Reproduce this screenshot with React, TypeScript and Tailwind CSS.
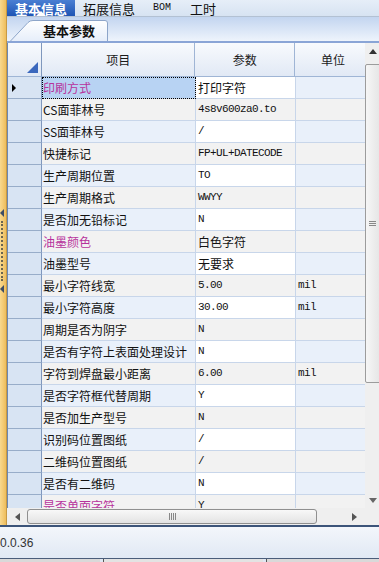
import clsx from 'clsx';

interface ParamRow {
  item: string;
  value: string;
  unit?: string;
  mark?: boolean;
}

const ROWS: ParamRow[] = [
  { item: '印刷方式', value: '打印字符', mark: true },
  { item: 'CS面菲林号', value: '4s8v600za0.to' },
  { item: 'SS面菲林号', value: '/' },
  { item: '快捷标记', value: 'FP+UL+DATECODE' },
  { item: '生产周期位置', value: 'TO' },
  { item: '生产周期格式', value: 'WWYY' },
  { item: '是否加无铅标记', value: 'N' },
  { item: '油墨颜色', value: '白色字符', mark: true },
  { item: '油墨型号', value: '无要求' },
  { item: '最小字符线宽', value: '5.00', unit: 'mil' },
  { item: '最小字符高度', value: '30.00', unit: 'mil' },
  { item: '周期是否为阴字', value: 'N' },
  { item: '是否有字符上表面处理设计', value: 'N' },
  { item: '字符到焊盘最小距离', value: '6.00', unit: 'mil' },
  { item: '是否字符框代替周期', value: 'Y' },
  { item: '是否加生产型号', value: 'N' },
  { item: '识别码位置图纸', value: '/' },
  { item: '二维码位置图纸', value: '/' },
  { item: '是否有二维码', value: 'N' },
  { item: '是否单面字符', value: 'Y', mark: true },
];

const CJK = "font-['Noto_Sans_CJK_SC',sans-serif]";
const MONO = "font-['Liberation_Mono','Noto_Sans_CJK_SC',monospace]";

function hasCjk(s: string) {
  return /[\u4e00-\u9fff]/.test(s);
}

function Splitter() {
  return (
    <div className="relative w-[7px] shrink-0 bg-gradient-to-r from-[#f9d98e] to-[#eebd5c] border-r border-[#c79a45]">
      <div className="absolute left-0 top-[209px] w-0 h-0 border-y-[4px] border-y-transparent border-r-[4px] border-r-[#3d4d66]" />
      <div className="absolute left-[1px] top-[221px] h-[60px] border-l-2 border-dotted border-[#6b6450]" />
      <div className="absolute left-0 top-[285px] w-0 h-0 border-y-[4px] border-y-transparent border-r-[4px] border-r-[#3d4d66]" />
    </div>
  );
}

function TopTabs() {
  return (
    <div className="flex h-[17px] items-stretch bg-gradient-to-b from-[#e6eef8] to-[#d7e3f2] border-b border-[#b3c1d3] text-[13px] leading-none">
      <div className={clsx('relative w-[68px] flex items-center justify-center bg-gradient-to-b from-[#4a7fd3] to-[#1e54b4] text-white font-bold', CJK)}>
        基本信息
        <div className="absolute left-[29px] bottom-0 w-0 h-0 border-x-[5px] border-x-transparent border-b-[5px] border-b-white" />
      </div>
      <div className={clsx('ml-[8px] flex items-center text-[#111]', CJK)}>拓展信息</div>
      <div className="ml-[18px] flex items-center text-[10px] text-[#111] font-['Liberation_Mono',monospace]">BOM</div>
      <div className={clsx('ml-[19px] flex items-center text-[#111]', CJK)}>工时</div>
    </div>
  );
}

function SubTabs() {
  return (
    <div className="h-[24px] flex items-end pl-[3px] bg-gradient-to-b from-[#c3d5f0] to-[#eef4fc]">
      <div className="relative w-[98px] h-[21px] flex items-center">
        <svg className="absolute inset-0" width="98" height="21" viewBox="0 0 98 21">
          <defs>
            <linearGradient id="subtab" x1="0" y1="0" x2="0" y2="1">
              <stop offset="0" stopColor="#ffffff" />
              <stop offset="1" stopColor="#e6eefa" />
            </linearGradient>
          </defs>
          <path d="M0.5,21 L18,2.5 Q20,0.5 23,0.5 L95,0.5 Q97.5,0.5 97.5,3 L97.5,21" fill="url(#subtab)" stroke="#8da5c9" />
        </svg>
        <span className={clsx('relative pl-[33px] text-[13px] font-bold text-[#111] leading-none', CJK)}>基本参数</span>
      </div>
    </div>
  );
}

function HeaderRow() {
  const cell = 'h-[34px] flex items-center border-r border-b border-[#9fb5d5] bg-gradient-to-b from-[#f8fafd] to-[#e1e9f5] text-[12px] text-[#1a1a1a] leading-none';
  return (
    <div className="flex">
      <div className={clsx(cell, 'relative w-[34px] border-r-[#7f97bd]')}>
        <div className="absolute right-[3px] bottom-[3px] w-0 h-0 border-l-[11px] border-l-transparent border-b-[11px] border-b-[#3b68bd]" />
      </div>
      <div className={clsx(cell, 'w-[154px] justify-center', CJK)}>项目</div>
      <div className={clsx(cell, 'w-[100px] justify-center', CJK)}>参数</div>
      <div className={clsx(cell, 'w-[70px] justify-end pr-[20px] border-r-0', CJK)}>单位</div>
    </div>
  );
}

function DataRow({ row, index }: { row: ParamRow; index: number }) {
  const odd = index % 2 === 1;
  const selected = index === 0;
  const line = 'border-b border-[#c8d6ea]';
  return (
    <div className="flex h-[22px] shrink-0">
      <div className="w-[34px] shrink-0 flex items-center pl-[4px] bg-[#d8e4f3] border-b border-r border-[#98adc9] border-r-[#7f97bd]">
        {selected && <div className="w-0 h-0 border-y-[4px] border-y-transparent border-l-[4px] border-l-black" />}
      </div>
      <div
        className={clsx(
          'w-[154px] shrink-0 flex items-center pl-[1px] text-[12px] leading-none whitespace-nowrap overflow-hidden border-r border-[#b3c6e1]',
          line,
          CJK,
          selected ? 'bg-[#b8d3f3] outline outline-1 outline-dotted outline-offset-[-1px] outline-black' : odd ? 'bg-[#f2f2f2]' : 'bg-[#e9f0fa]',
          row.mark ? 'text-[#b7329c]' : 'text-[#111]'
        )}
      >
        {row.item}
      </div>
      <div
        className={clsx(
          'w-[100px] shrink-0 flex items-center pl-[2px] leading-none whitespace-nowrap overflow-hidden border-r border-[#c2d2e8] text-[#111]',
          line,
          odd ? 'bg-[#f2f2f2]' : 'bg-white',
          hasCjk(row.value) ? clsx(CJK, 'text-[12px]') : clsx(MONO, 'text-[11px] tracking-[-0.6px]')
        )}
      >
        {row.value}
      </div>
      <div
        className={clsx(
          'w-[70px] shrink-0 flex items-center pl-[2px] text-[11px] tracking-[-0.6px] leading-none text-[#111]',
          line,
          MONO,
          odd ? 'bg-[#f2f2f2]' : 'bg-[#e9f0fa]'
        )}
      >
        {row.unit}
      </div>
    </div>
  );
}

function VScroll() {
  return (
    <div className="relative w-[14px] shrink-0 bg-[#efefef]">
      <div className="absolute left-[4px] top-[6px] w-0 h-0 border-x-[4px] border-x-transparent border-b-[5px] border-b-[#333]" />
      <div className="absolute left-0 top-[21px] w-[17px] h-[319px] rounded-[2px] border border-[#9c9c9c] bg-gradient-to-r from-[#f6f6f6] to-[#e4e4e4] flex flex-col items-center justify-center gap-[1px] pr-[3px]">
        <div className="w-[7px] h-px bg-[#888]" />
        <div className="w-[7px] h-px bg-[#888]" />
        <div className="w-[7px] h-px bg-[#888]" />
      </div>
      <div className="absolute left-[4px] top-[455px] w-0 h-0 border-x-[4px] border-x-transparent border-t-[5px] border-t-[#666]" />
    </div>
  );
}

function HScroll() {
  return (
    <div className="flex h-[17px]">
      <div className="relative w-[358px] bg-[#efefef] flex items-center">
        <div className="ml-[8px] w-0 h-0 border-y-[4px] border-y-transparent border-r-[5px] border-r-[#555]" />
        <div className="ml-[7px] w-[290px] h-[15px] rounded-[3px] border border-[#8f8f8f] bg-gradient-to-b from-[#f8f8f8] to-[#e3e3e3] flex items-center justify-center gap-[1px]">
          <div className="w-px h-[7px] bg-[#888]" />
          <div className="w-px h-[7px] bg-[#888]" />
          <div className="w-px h-[7px] bg-[#888]" />
          <div className="w-px h-[7px] bg-[#888]" />
        </div>
        <div className="ml-auto mr-[8px] w-0 h-0 border-y-[4px] border-y-transparent border-l-[5px] border-l-[#555]" />
      </div>
      <div className="w-[14px] bg-[#efefef]" />
    </div>
  );
}

export default function App() {
  return (
    <div className="w-[379px] h-[562px] flex flex-col overflow-hidden bg-[#f0f0f0]">
      <div className="flex h-[525px]">
        <Splitter />
        <div className="flex-1 min-w-0 flex flex-col">
          <TopTabs />
          <SubTabs />
          <div className="h-[2px] bg-[#8aa5d6]" />
          <div className="flex h-[465px] border-l border-[#6d87b0]">
            <div className="w-[357px] flex flex-col overflow-hidden bg-white">
              <HeaderRow />
              {ROWS.map((row, i) => (
                <DataRow key={row.item} row={row} index={i} />
              ))}
            </div>
            <VScroll />
          </div>
          <HScroll />
        </div>
      </div>
      <div className="h-[37px] border-t-2 border-[#3c5479] bg-gradient-to-b from-[#f3f6fb] to-[#dee7f3] flex flex-col">
        <div className="flex-1 flex items-center text-[12px] text-[#333] font-['Liberation_Sans',sans-serif] leading-none">0.0.36</div>
        <div className="h-[4px] flex gap-[3px] border-t border-[#4a5d7a]">
          <div className="w-[100px] bg-[#d9d9d9]" />
          <div className="w-[160px] bg-[#e3e3e3] border-l border-[#555]" />
          <div className="flex-1 bg-[#d9d9d9] border-l border-[#555]" />
        </div>
      </div>
    </div>
  );
}
